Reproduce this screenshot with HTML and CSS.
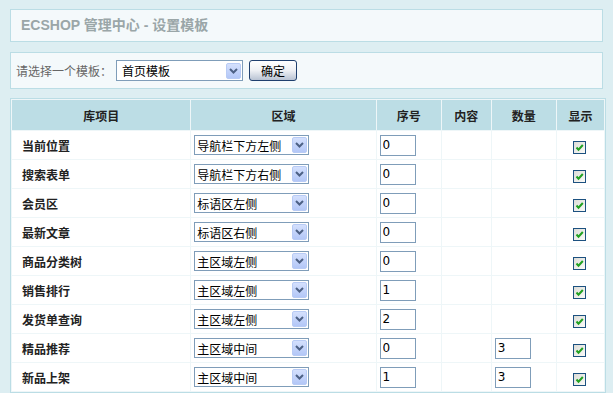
FILE: index.html
```html
<!DOCTYPE html>
<html lang="zh-CN">
  <head>
    <meta charset="UTF-8" />
    <title>ECSHOP 管理中心 - 设置模板</title>
    <link rel="stylesheet" href="styles.css">
  </head>
  <body>
    <h1 class="title">ECSHOP 管理中心 - 设置模板</h1>

    <form class="pick">
      <label>请选择一个模板：</label>
      <span class="sel wide">
        <select><option>首页模板</option></select>
        <i class="arr"><svg width="9" height="6" viewBox="0 0 9 6"><path d="M1 1l3.5 3.5L8 1" fill="none" stroke="#4d6185" stroke-width="2"/></svg></i>
      </span>
      <button type="button">确定</button>
    </form>

    <div class="list">
      <table cellspacing="1">
        <colgroup>
          <col style="width:178px"><col style="width:184px"><col style="width:64px">
          <col style="width:49px"><col style="width:64px"><col style="width:47px">
        </colgroup>
        <thead>
          <tr><th>库项目</th><th>区域</th><th>序号</th><th>内容</th><th>数量</th><th>显示</th></tr>
        </thead>
        <tbody id="rows"></tbody>
      </table>
    </div>

    <script>
      const rows = [
        ["当前位置", "导航栏下方左侧", "0", ""],
        ["搜索表单", "导航栏下方右侧", "0", ""],
        ["会员区", "标语区左侧", "0", ""],
        ["最新文章", "标语区右侧", "0", ""],
        ["商品分类树", "主区域左侧", "0", ""],
        ["销售排行", "主区域左侧", "1", ""],
        ["发货单查询", "主区域左侧", "2", ""],
        ["精品推荐", "主区域中间", "0", "3"],
        ["新品上架", "主区域中间", "1", "3"]
      ];
      const arrow = '<i class="arr"><svg width="9" height="6" viewBox="0 0 9 6"><path d="M1 1l3.5 3.5L8 1" fill="none" stroke="#4d6185" stroke-width="2"/></svg></i>';
      const check = '<span class="chk"><svg width="11" height="11" viewBox="0 0 11 11"><path d="M2.5 5.5l2 2.2L8.8 3" fill="none" stroke="#21a121" stroke-width="2"/></svg></span>';
      const body = document.getElementById("rows");
      for (const r of rows) {
        body.innerHTML += `
          <tr>
            <td class="name">${r[0]}</td>
            <td><span class="sel"><select><option>${r[1]}</option></select>${arrow}</span></td>
            <td><input type="text" value="${r[2]}" /></td>
            <td></td>
            <td>${r[3] ? `<input type="text" value="${r[3]}" />` : ""}</td>
            <td class="center">${check}</td>
          </tr>
        `;
      }
    </script>
  </body>
</html>
```

FILE: styles.css
```css
* {
  box-sizing: border-box;
}
html {
  overflow: hidden;
}
body {
  margin: 0;
  padding: 9px 10px;
  background: #ddeef2;
  font-family: "Noto Sans CJK SC", "Liberation Sans", sans-serif;
  font-size: 12px;
  color: #222;
}
.title {
  margin: 0 0 10px 0;
  height: 33px;
  padding: 0 10px;
  line-height: 31px;
  background: #f4f9fb;
  border: 1px solid #bbdde5;
  font-family: "Liberation Sans", "Noto Sans CJK SC", sans-serif;
  font-size: 14px;
  font-weight: bold;
  color: #9aa6a8;
}
.pick {
  display: flex;
  align-items: center;
  height: 37px;
  margin-bottom: 9px;
  padding: 0 5px;
  background: #f4f9fb;
  border: 1px solid #bbdde5;
  color: #666;

  & label {
    width: 100px;
  }
  & button {
    width: 48px;
    height: 21px;
    margin-left: 6px;
    padding: 0;
    border: 1px solid #1f3f6e;
    border-radius: 3px;
    background: linear-gradient(#ffffff, #eef0f4 50%, #b9c3d3);
    font-family: inherit;
    font-size: 12px;
    color: #000;
  }
}
.sel {
  display: inline-flex;
  align-items: center;
  width: 115px;
  height: 20px;
  padding: 0 1px 0 2px;
  background: #fff;
  border: 1px solid #7f9db9;
  vertical-align: middle;

  & select {
    flex: 1;
    min-width: 0;
    height: 100%;
    padding: 0;
    border: 0;
    outline: none;
    background: transparent;
    appearance: none;
    font-family: inherit;
    font-size: 12px;
    color: #000;
  }
  &.wide {
    width: 127px;
    height: 21px;
    padding-left: 5px;
  }
}
.arr {
  display: flex;
  align-items: center;
  justify-content: center;
  width: 15px;
  height: 16px;
  border: 1px solid #b8cbf5;
  border-radius: 2px;
  background: linear-gradient(#d4e0fd, #b3c7f7);
}
.list {
  margin-right: -3px;
  border: 1px solid #bbdde5;
  background: #eef6f8;

  & table {
    width: 100%;
    table-layout: fixed;
  }
  & th {
    height: 30px;
    padding: 0;
    background: #bcdde5;
    font-weight: bold;
    color: #222;
  }
  & td {
    height: 28px;
    padding: 0 3px;
    background: #fff;
  }
  & td.name {
    padding-left: 10px;
    font-weight: bold;
  }
  & td.center {
    text-align: center;
  }
  & input {
    display: block;
    width: 36px;
    height: 21px;
    padding: 0 2px;
    border: 1px solid #7f9db9;
    font-family: "DejaVu Sans", sans-serif;
    font-size: 12px;
    color: #000;
    outline: none;
  }
}
table {
  border: 0;
}
.chk {
  display: inline-flex;
  align-items: center;
  justify-content: center;
  width: 13px;
  height: 13px;
  margin-left: -2px;
  border: 1px solid #1c5180;
  background: linear-gradient(135deg, #dcdcd7, #fbfbf9);
  vertical-align: middle;
}
```
